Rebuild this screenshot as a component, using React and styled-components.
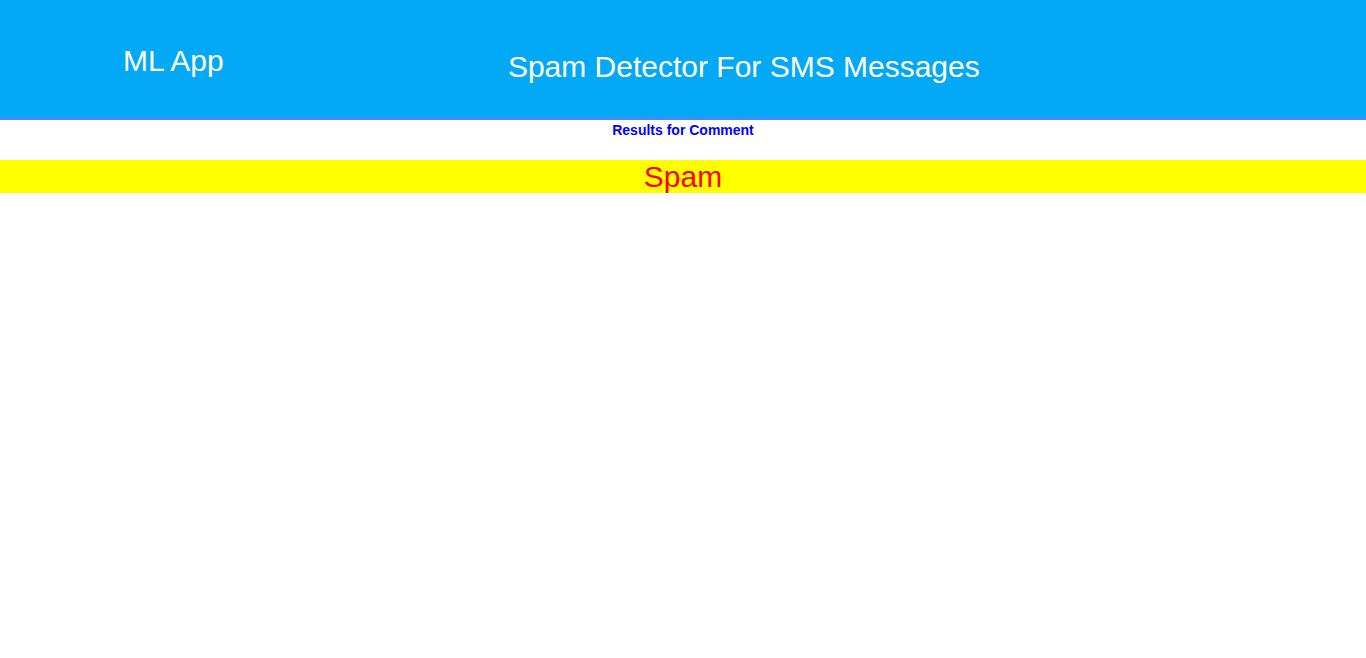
import React from 'react'
import styled, { createGlobalStyle } from 'styled-components'

const GlobalStyle = createGlobalStyle`
  body {
    margin: 0;
    background: #ffffff;
    font-family: 'Liberation Sans', Arial, sans-serif;
  }
`

const Header = styled.header`
  background: #03a9f4;
  border-bottom: 3px solid #448aff;
  height: 117px;
  display: flex;
  align-items: flex-start;
  padding: 0 102px 0 123px;
  color: #ffffff;
`

const Brand = styled.div`
  font-size: 30px;
  line-height: 34px;
  margin-top: 44px;
`

const Title = styled.div`
  flex: 1;
  text-align: center;
  font-size: 30px;
  line-height: 34px;
  margin-top: 50px;
`

const Subtitle = styled.div`
  text-align: center;
  color: #0000ff;
  font-weight: bold;
  font-size: 14px;
  line-height: 16px;
  padding-top: 2px;
  height: 38px;
`

const Result = styled.div`
  background: #ffff00;
  color: #ff0000;
  text-align: center;
  font-size: 30px;
  height: 33px;
  line-height: 33px;
`

export default function App() {
  return (
    <>
      <GlobalStyle />
      <Header>
        <Brand>ML App</Brand>
        <Title>Spam Detector For SMS Messages</Title>
      </Header>
      <Subtitle>Results for Comment</Subtitle>
      <Result>Spam</Result>
    </>
  )
}
